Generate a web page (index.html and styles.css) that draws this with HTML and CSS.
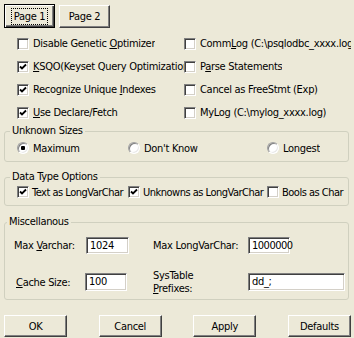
FILE: index.html
```html
<!DOCTYPE html>
<html lang="en">
<head>
    <meta charset="UTF-8">
    <title>Advanced Options</title>
    <link rel="stylesheet" href="styles.css">
</head>
<body>
    <div class="tabs">
        <button class="btn page default"><span class="focus">Page 1</span></button>
        <button class="btn page">Page 2</button>
    </div>

    <div class="options">
        <label class="opt"><span class="check"></span><span class="text">Disable Genetic <u>O</u>ptimizer</span></label>
        <label class="opt"><span class="check"></span><span class="text">Comm<u>L</u>og (C:\psqlodbc_xxxx.log)</span></label>
        <label class="opt"><span class="check on"></span><span class="text"><u>K</u>SQO(Keyset Query Optimization)</span></label>
        <label class="opt"><span class="check"></span><span class="text">P<u>a</u>rse Statements</span></label>
        <label class="opt"><span class="check on"></span><span class="text">Recognize Unique <u>I</u>ndexes</span></label>
        <label class="opt"><span class="check"></span><span class="text">Cancel as FreeStmt (Exp)</span></label>
        <label class="opt"><span class="check on"></span><span class="text"><u>U</u>se Declare/Fetch</span></label>
        <label class="opt"><span class="check"></span><span class="text">MyLog (C:\mylog_xxxx.log)</span></label>
    </div>

    <fieldset class="group sizes">
        <legend class="group-title">Unknown Sizes</legend>
        <div class="row">
            <label class="opt"><span class="radio on"></span><span class="text">Maximum</span></label>
            <label class="opt"><span class="radio"></span><span class="text">Don't Know</span></label>
            <label class="opt"><span class="radio"></span><span class="text">Longest</span></label>
        </div>
    </fieldset>

    <fieldset class="group types">
        <legend class="group-title">Data Type Options</legend>
        <div class="row">
            <label class="opt"><span class="check on"></span><span class="text">Text as LongVarChar</span></label>
            <label class="opt"><span class="check on"></span><span class="text">Unknowns as LongVarChar</span></label>
            <label class="opt"><span class="check"></span><span class="text">Bools as Char</span></label>
        </div>
    </fieldset>

    <fieldset class="group misc">
        <legend class="group-title">Miscellanous</legend>
        <div class="fields">
            <span class="field-label">Max <u>V</u>archar:</span>
            <span class="input short">1024</span>
            <span class="field-label">Max LongVarChar:</span>
            <span class="input long-num">1000000</span>
            <span class="field-label cache"><u>C</u>ache Size:</span>
            <span class="input short cache-input">100</span>
            <span class="field-label prefix">SysTable<br><u>P</u>refixes:</span>
            <span class="input wide">dd_;</span>
        </div>
    </fieldset>

    <div class="actions">
        <button class="btn">OK</button>
        <button class="btn">Cancel</button>
        <button class="btn">Apply</button>
        <button class="btn">Defaults</button>
    </div>
</body>
</html>
```

FILE: styles.css
```css
body {
    margin: 0;
    width: 354px;
    height: 338px;
    overflow: hidden;
    background: #ece9d8;
    color: #000;
    font-family: "DejaVu Sans Condensed", "DejaVu Sans", sans-serif;
    font-stretch: condensed;
    font-size: 11px;
    line-height: 13px;
    letter-spacing: -0.3px;
}
u {
    text-decoration-thickness: 1px;
    text-underline-offset: 1px;
}
.btn {
    box-sizing: border-box;
    width: 63px;
    height: 22px;
    padding: 0;
    font: inherit;
    letter-spacing: inherit;
    color: #000;
    background: #ece9d8;
    border: 1px solid;
    border-color: #fff #404040 #404040 #fff;
    box-shadow: inset -1px -1px 0 #808080;
}
.tabs {
    display: flex;
    gap: 4px;
    padding: 4px 0 0 4px;
    height: 24px;
}
.btn.page {
    width: 51px;
    height: 23px;
    margin-top: 1px;
}
.btn.default {
    height: 24px;
    margin-top: 0;
    outline: none;
    border: 1px solid #000;
    box-shadow: inset 1px 1px 0 #fff, inset -1px -1px 0 #404040, inset -2px -2px 0 #808080;
}
.focus {
    padding: 1px 2px;
    border: 1px dotted #000;
}
.options {
    display: grid;
    grid-template-columns: 167px 1fr;
    grid-auto-rows: 23px;
    margin-top: 4px;
    padding-left: 17px;
    padding-right: 3px;
}
.opt {
    display: flex;
    align-items: center;
    gap: 4px;
    min-width: 0;
    white-space: nowrap;
}
.text {
    overflow: hidden;
}
.check, .radio {
    flex: none;
    box-sizing: border-box;
    width: 12px;
    height: 12px;
    background: #fff center / 10px 10px no-repeat;
    border: 1px solid;
    border-color: #808080 #fff #fff #808080;
    box-shadow: inset 1px 1px 0 #404040, inset -1px -1px 0 #d4d0c8;
}
.check.on {
    background-image: url("data:image/svg+xml,%3Csvg xmlns='http://www.w3.org/2000/svg' viewBox='0 0 10 10'%3E%3Cpath d='M2 4.5 L4 6.5 L8 2.5' fill='none' stroke='%23000' stroke-width='1.8'/%3E%3C/svg%3E");
}
.radio {
    border-radius: 50%;
    border-color: #a0a0a0 #fff #fff #a0a0a0;
    box-shadow: inset 1px 1px 0 #808080, inset -1px -1px 0 #e8e8e8;
}
.radio.on {
    background-image: radial-gradient(circle, #000 0 2px, transparent 2.5px);
}
.group {
    box-sizing: border-box;
    width: 345px;
    margin: 0 0 0 4px;
    padding: 0 3px 6px 12px;
    border: 1px solid #d0d0bf;
    border-radius: 3px;
    min-width: 0;
}
.group-title {
    margin-left: -7px;
    padding: 0 2px;
    line-height: 12px;
}
.group .row {
    display: grid;
    grid-template-columns: 111px 139px 1fr;
    height: 14px;
}
.sizes {
    margin-top: 1px;
    padding-top: 4px;
}
.types {
    margin-top: 9px;
    padding-top: 2px;
}
.types .opt {
    gap: 3px;
    letter-spacing: -0.5px;
}
.types .text {
    overflow: visible;
}
.misc {
    margin-top: 10px;
    padding: 9px 3px 4px 9px;
}
.fields {
    display: grid;
    grid-template-columns: 72px 67px 95px 1fr;
    row-gap: 15px;
    align-items: center;
}
.input {
    box-sizing: border-box;
    height: 17px;
    padding: 1px 0 0 3px;
    line-height: 13px;
    background: #fff;
    border: 1px solid;
    border-color: #808080 #fff #fff #808080;
    box-shadow: inset 1px 1px 0 #404040, inset -1px -1px 0 #d4d0c8;
}
.short {
    width: 43px;
}
.long-num {
    width: 42px;
    letter-spacing: -0.5px;
}
.wide {
    width: 97px;
    height: 18px;
}
.cache {
    padding-left: 2px;
}
.cache-input {
    width: 42px;
    height: 18px;
    margin-left: -1px;
}
.prefix {
    align-self: start;
}
.actions {
    display: flex;
    justify-content: space-between;
    margin-top: 15px;
    padding: 0 3px 0 4px;
}
```
